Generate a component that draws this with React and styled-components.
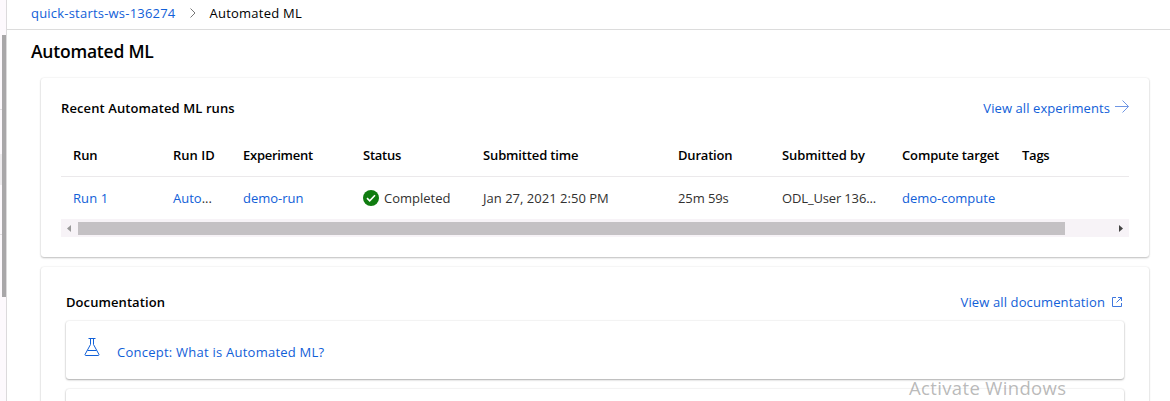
import React from "react";
import styled, { createGlobalStyle } from "styled-components";

const Global = createGlobalStyle`
  * { box-sizing: border-box; }
  body {
    margin: 0;
    background: #fff;
    color: #000;
    font: 400 13px/20px "Segoe UI", "Open Sans", "Noto Sans", sans-serif;
    overflow: hidden;
  }
`;

const Shell = styled.div`
  display: flex;
  height: 401px;
  overflow: hidden;
`;

const Rail = styled.div`
  display: flex;
  width: 7px;
  flex: none;
  background: #fdf9fd;
  border-right: 1px solid #dcdadc;
`;

const RailEdge = styled.div`
  width: 2px;
  padding-top: 109px;
`;

const RailMark = styled.div`
  height: ${(p) => p.$height}px;
  margin-bottom: ${(p) => p.$after}px;
  background: ${(p) => p.$color};
`;

const RailThumb = styled.div`
  width: 4px;
  height: 262px;
  margin-top: 35px;
  background: #a9a7a9;
`;

const Main = styled.main`
  flex: 1;
  min-width: 0;
`;

const Breadcrumb = styled.nav`
  display: flex;
  align-items: center;
  height: 30px;
  padding: 0 0 3px 24px;
  border-bottom: 1px solid #dcdcdc;
`;

const Text = styled.span`
  white-space: nowrap;
  letter-spacing: ${(p) => p.$track || 0}px;
  color: ${(p) => p.$color || "inherit"};
  font-weight: ${(p) => p.$weight || 400};
`;

const Link = styled(Text).attrs({ as: "a" })`
  color: #1160d8;
`;

const Chevron = styled.svg`
  width: 8px;
  height: 12px;
  margin: 0 13px 0 13px;
`;

const Title = styled.h1`
  margin: 11px 0 17px 24px;
  font-size: 17.5px;
  line-height: 20px;
  font-weight: 600;
  letter-spacing: ${(p) => p.$track || 0}px;
`;

const Card = styled.section`
  width: 1108px;
  margin: 0 0 10px 34px;
  height: ${(p) => p.$height}px;
  padding: ${(p) => p.$pad};
  border-radius: 3px;
  background: #fff;
  box-shadow: 0 1px 2px rgba(0, 0, 0, 0.24), 0 0 2px rgba(0, 0, 0, 0.1);
`;

const CardHead = styled.div`
  display: flex;
  justify-content: space-between;
  align-items: center;
  height: 20px;
`;

const Action = styled.div`
  display: flex;
  align-items: center;
  gap: ${(p) => p.$gap}px;
`;

const ArrowIcon = styled.svg`
  width: 14px;
  height: 14px;
  margin-bottom: 3px;
`;

const Row = styled.div`
  display: grid;
  grid-template-columns: 100px 70px 120px 120px 195px 104px 120px 120px 1fr;
  align-items: center;
  height: ${(p) => p.$height}px;
  padding-left: 12px;
  color: #323130;
`;

const HeaderRow = styled(Row)`
  margin-top: 16px;
  padding-bottom: 1px;
  border-bottom: 1px solid #ebe9eb;
  color: #000;
`;

const Status = styled.div`
  display: flex;
  align-items: center;
  gap: 5px;
`;

const ScrollTrack = styled.div`
  display: flex;
  align-items: center;
  height: 18px;
  background: #f7f3f7;
`;

const ScrollArrow = styled.svg`
  width: 17px;
  height: 18px;
  flex: none;
`;

const ScrollThumb = styled.div`
  width: 987px;
  height: 13px;
  margin-right: auto;
  background: #c4c1c4;
`;

const DocItem = styled.article`
  display: flex;
  align-items: center;
  height: 58px;
  margin-top: ${(p) => p.$top}px;
  padding: 3px 0 0 18px;
  border-radius: 3px;
  background: #fff;
  box-shadow: 0 1px 2px rgba(0, 0, 0, 0.3), 0 0 2px rgba(0, 0, 0, 0.12);
`;

const Flask = styled.svg`
  width: 16px;
  height: 20px;
  margin: -9px 17px 0 0;
`;

const Watermark = styled.div`
  position: absolute;
  left: 909px;
  top: 376px;
  font-size: 18.5px;
  line-height: 24px;
  letter-spacing: ${(p) => p.$track || 0}px;
  white-space: nowrap;
  color: rgba(120, 120, 120, 0.52);
`;

const columns = [
  ["Run", -0.1],
  ["Run ID", 0],
  ["Experiment", -0.27],
  ["Status", -0.25],
  ["Submitted time", -0.14],
  ["Duration", -0.2],
  ["Submitted by", -0.08],
  ["Compute target", -0.14],
  ["Tags", -0.25],
];

export default function App() {
  return (
    <>
      <Global />
      <Shell>
        <Rail>
          <RailEdge>
            <RailMark $height={1} $after={44} $color="#e2dfe2" />
            <RailMark $height={31} $after={49} $color="#efecef" />
            <RailMark $height={1} $after={0} $color="#e2dfe2" />
          </RailEdge>
          <RailThumb />
        </Rail>
        <Main>
          <Breadcrumb>
            <Link $track={0.21}>quick-starts-ws-136274</Link>
            <Chevron viewBox="0 0 8 12" fill="none" stroke="#777">
              <path d="M1.500 1.500 6 6l-4.500 4.500" />
            </Chevron>
            <Text $track={0.23}>Automated ML</Text>
          </Breadcrumb>
          <Title $track={-0.22}>Automated ML</Title>
          <Card $height={179} $pad="20px 20px 0">
            <CardHead>
              <Text $weight={600} $track={0.1}>Recent Automated ML runs</Text>
              <Action $gap={5}>
                <Link $track={0.08}>View all experiments</Link>
                <ArrowIcon viewBox="0 0 14 14" fill="none" stroke="#6f96e4">
                  <path d="M0 6.500h13.500M7.500.5l6 6-6 6" />
                </ArrowIcon>
              </Action>
            </CardHead>
            <HeaderRow $height={43}>
              {columns.map(([label, track]) => (
                <Text key={label} $weight={600} $track={track}>{label}</Text>
              ))}
            </HeaderRow>
            <Row $height={42}>
              <Link $track={0.1}>Run 1</Link>
              <Text><Link>Auto</Link>...</Text>
              <Link>demo-run</Link>
              <Status>
                <svg width="16" height="16" viewBox="0 0 16 16">
                  <circle cx="8" cy="8" r="8" fill="#107c10" />
                  <path d="M4 8.200 6.700 10.800 12 5.300" fill="none" stroke="#fff" strokeWidth="1.600" />
                </svg>
                <Text>Completed</Text>
              </Status>
              <Text $track={0.02}>Jan 27, 2021 2:50 PM</Text>
              <Text $track={-0.1}>25m 59s</Text>
              <Text $track={-0.15}>ODL_User 136...</Text>
              <Link>demo-compute</Link>
            </Row>
            <ScrollTrack>
              <ScrollArrow viewBox="0 0 17 18"><path d="M10 6v7L6 9.500z" fill="#999" /></ScrollArrow>
              <ScrollThumb />
              <ScrollArrow viewBox="0 0 17 18"><path d="M7 6v7l4-3.500z" fill="#444" /></ScrollArrow>
            </ScrollTrack>
          </Card>
          <Card $height={160} $pad="25px 25px 0">
            <CardHead>
              <Text $weight={600} $track={0.08}>Documentation</Text>
              <Action $gap={7}>
                <Link $track={0.12}>View all documentation</Link>
                <svg width="12" height="12" viewBox="0 0 12 12" fill="none" stroke="#3f78de">
                  <path d="M4 1.500H.5v9h9V7M6 1.500h3.500V5M4.500 6.500l5-5" />
                </svg>
              </Action>
            </CardHead>
            <DocItem $top={9}>
              <Flask viewBox="0 0 16 20" fill="none" stroke="#1160d8">
                <path d="M4.500 1.500h7M6.500 1.500v6L1 17.500q0 1 1 1h12q1 0 1-1L9.500 7.500v-6" />
                <path d="M3.500 13.500h9" />
              </Flask>
              <Link $track={0.24}>Concept: What is Automated ML?</Link>
            </DocItem>
            <DocItem $top={10} />
          </Card>
        </Main>
      </Shell>
      <Watermark $track={0.35}>Activate Windows</Watermark>
    </>
  );
}
